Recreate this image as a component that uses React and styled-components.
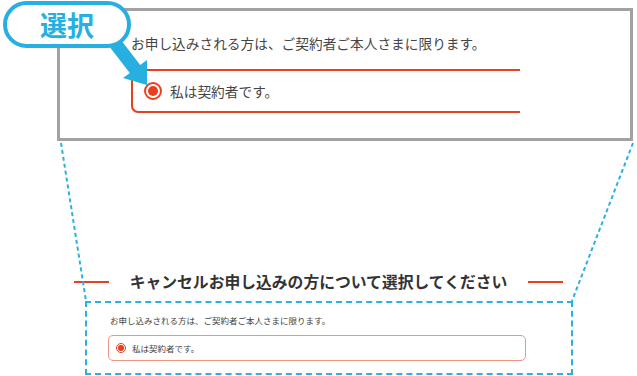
import React from "react";
import styled, { createGlobalStyle } from "styled-components";

const GlobalStyle = createGlobalStyle`
  body {
    margin: 0;
    background: #ffffff;
  }
`;

const Canvas = styled.div`
  position: relative;
  width: 637px;
  height: 376px;
  overflow: hidden;
  background: #ffffff;
  display: flex;
  flex-direction: column;
  font-family: "Noto Sans CJK JP", "Noto Sans", sans-serif;
  color: #3a3a3a;
`;

const ZoomPanel = styled.div`
  box-sizing: border-box;
  margin: 8px 0 0 57px;
  width: 576px;
  height: 133px;
  border: 3px solid #a2a2a2;
  padding: 22px 0 0 71px;
`;

const Lead = styled.p`
  margin: 0;
  font-size: ${(p) => (p.$small ? "8.5px" : "13.7px")};
  line-height: ${(p) => (p.$small ? "12px" : "20px")};
  padding-left: ${(p) => (p.$small ? "2px" : "0")};
  color: #444;
  white-space: nowrap;
`;

const BigOption = styled.div`
  box-sizing: border-box;
  margin-top: 16px;
  width: 389px;
  height: 44px;
  border: 2px solid #e8401f;
  border-right: none;
  border-radius: 7px 0 0 7px;
  display: flex;
  align-items: center;
  gap: 8px;
  padding-left: 11px;
  font-size: 13.7px;
  color: #444;
`;

const SmallOption = styled.div`
  box-sizing: border-box;
  margin-top: 9px;
  width: 418px;
  height: 26px;
  border: 1.5px solid #f19484;
  border-radius: 5px;
  display: flex;
  align-items: center;
  gap: 6px;
  padding-left: 7px;
  font-size: 8.5px;
  color: #444;
`;

const Radio = styled.span`
  box-sizing: border-box;
  flex: none;
  position: relative;
  width: ${(p) => p.$size}px;
  height: ${(p) => p.$size}px;
  border-radius: 50%;
  border: ${(p) => (p.$size > 12 ? 2 : 1.2)}px solid #e8401f;
  background: #fff;

  &::after {
    content: "";
    position: absolute;
    inset: ${(p) => (p.$size > 12 ? 2 : 1.3)}px;
    border-radius: 50%;
    background: #e8401f;
  }
`;

const TitleRow = styled.div`
  margin-top: 130px;
  height: 22px;
  display: flex;
  align-items: center;
  justify-content: center;
  gap: 21px;
`;

const TitleRule = styled.span`
  width: 35px;
  height: 2px;
  background: #e8401f;
`;

const Title = styled.h2`
  margin: 0;
  font-size: 15.8px;
  line-height: 22px;
  font-weight: 700;
  color: #333;
  white-space: nowrap;
`;

const FormBox = styled.div`
  box-sizing: border-box;
  margin: 8px 0 0 85px;
  width: 488px;
  height: 74px;
  border: 2px dashed #2ab1e2;
  padding: 11px 0 0 21px;
`;

const Callout = styled.div`
  position: absolute;
  left: 3px;
  top: 1px;
  z-index: 3;
  box-sizing: border-box;
  width: 128px;
  height: 47px;
  border: 4px solid #27afe1;
  border-radius: 24px;
  background: #fff;
  display: flex;
  align-items: center;
  justify-content: center;
  font-size: 27px;
  font-weight: 700;
  color: #27afe1;
  letter-spacing: 0;
`;

const Overlay = styled.svg`
  position: absolute;
  left: 0;
  top: 0;
  z-index: 2;
  pointer-events: none;
`;

export default function App() {
  return (
    <>
      <GlobalStyle />
      <Canvas>
        <ZoomPanel>
          <Lead>お申し込みされる方は、ご契約者ご本人さまに限ります。</Lead>
          <BigOption>
            <Radio $size={18} />
            私は契約者です。
          </BigOption>
        </ZoomPanel>

        <TitleRow>
          <TitleRule />
          <Title>キャンセルお申し込みの方について選択してください</Title>
          <TitleRule />
        </TitleRow>

        <FormBox>
          <Lead $small>お申し込みされる方は、ご契約者ご本人さまに限ります。</Lead>
          <SmallOption>
            <Radio $size={10} />
            私は契約者です。
          </SmallOption>
        </FormBox>

        <Overlay width="637" height="376" viewBox="0 0 637 376">
          <g stroke="#2ab1e2" strokeWidth="2" strokeDasharray="4 3" fill="none">
            <line x1="61" y1="143" x2="86" y2="301" />
            <line x1="633" y1="143" x2="572" y2="301" />
          </g>
          <polygon
            fill="#27afe1"
            points="102.8,37.9 113.2,30.1 140.2,65.1 147,60 147,85 123,78 129.8,72.9"
          />
        </Overlay>

        <Callout>選択</Callout>
      </Canvas>
    </>
  );
}
